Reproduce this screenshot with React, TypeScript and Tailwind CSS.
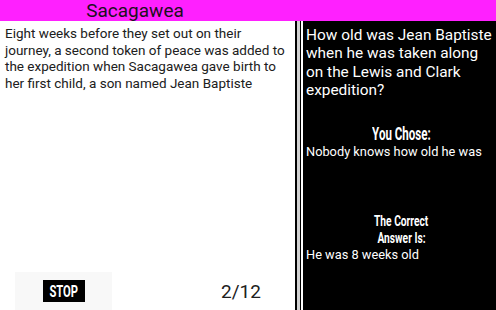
const condensed = 'inline-block font-bold scale-x-[0.66] origin-center'

export default function App() {
  return (
    <div className="flex h-[310px] w-[496px] flex-col overflow-hidden bg-white font-['Roboto',sans-serif]">
      {/* header */}
      <header className="h-[21px] shrink-0 bg-[#ff20ff]">
        <h1 className="w-[270px] text-center text-[19px] leading-[21px] text-[#1c1020]">Sacagawea</h1>
      </header>

      <div className="flex min-h-0 flex-1">
        {/* story side */}
        <section className="flex w-[295px] shrink-0 flex-col bg-white">
          <p className="whitespace-nowrap px-[5px] pt-[4px] text-[13.5px] leading-[16.5px] text-[#202020]">
            Eight weeks before they set out on their
            <br />
            journey, a second token of peace was added to
            <br />
            the expedition when Sacagawea gave birth to
            <br />
            her first child, a son named Jean Baptiste
          </p>
          <div className="mt-auto flex h-[45px] items-center pt-[7px]">
            <div className="ml-[15px] flex h-full w-[97px] items-center justify-center bg-[#f8f8f8]">
              <button className="flex h-[22px] w-[42px] items-center justify-center bg-black text-[17px] leading-none text-white">
                <span className={condensed}>STOP</span>
              </button>
            </div>
            <span className="ml-[109px] text-[19px] leading-none text-[#202020]">2/12</span>
          </div>
        </section>

        {/* divider */}
        <div className="w-[2px] shrink-0 bg-black" />
        <div className="w-[3px] shrink-0 bg-[#d0d0d0]" />
        <div className="w-[1px] shrink-0 bg-black" />
        <div className="w-[2px] shrink-0 bg-white" />

        {/* quiz side */}
        <section className="flex-1 bg-black pl-[3px] text-white">
          <p className="whitespace-nowrap pt-[5px] text-[15.4px] leading-[18.3px]">
            How old was Jean Baptiste
            <br />
            when he was taken along
            <br />
            on the Lewis and Clark
            <br />
            expedition?
          </p>
          <div className="mt-[26px] text-center text-[17.5px] leading-[18px]">
            <span className={condensed}>You Chose:</span>
          </div>
          <p className="text-[12.8px] leading-[17px]">Nobody knows how old he was</p>
          <div className="mt-[53px] flex flex-col items-center text-[15.5px] leading-[17px]">
            <span className={condensed}>The Correct</span>
            <span className={condensed}>Answer Is:</span>
          </div>
          <p className="mt-[-1px] text-[12.8px] leading-[17px]">He was 8 weeks old</p>
        </section>
      </div>
    </div>
  )
}
